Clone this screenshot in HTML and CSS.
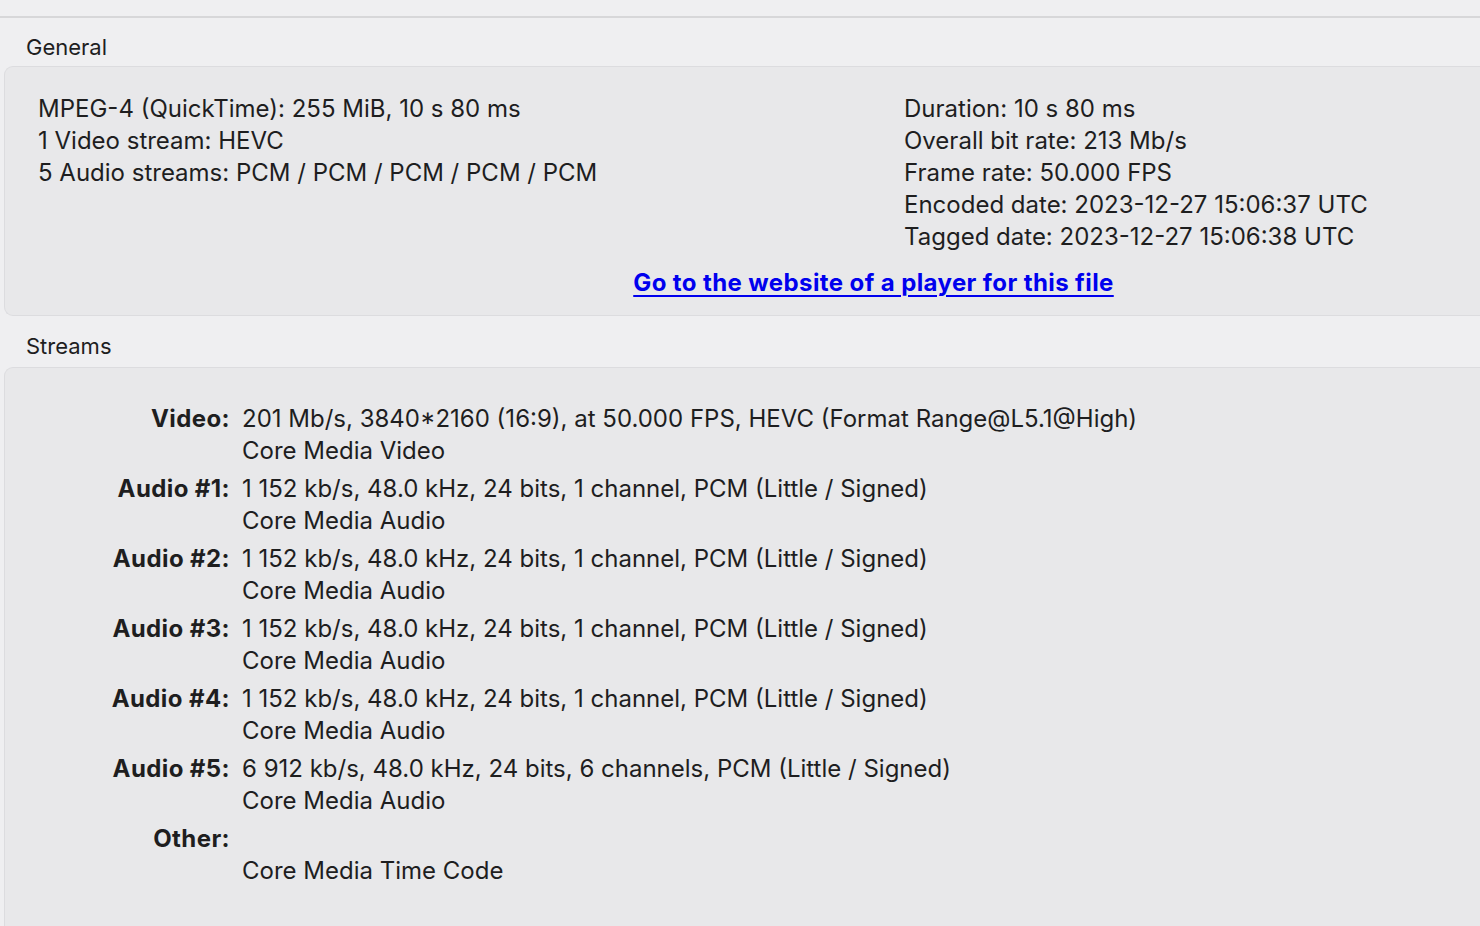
FILE: index.html
```html
<!DOCTYPE html>
<html>
<head>
<meta charset="utf-8">
<link rel="stylesheet" href="styles.css">
</head>
<body>
<div class="topbar"></div>
<div class="section-title">General</div>
<div class="box general">
  <div class="cols">
    <div class="col left">
      <div class="line">MPEG-4 (QuickTime): 255 MiB, 10 s 80 ms</div>
      <div class="line">1 Video stream: HEVC</div>
      <div class="line">5 Audio streams: PCM / PCM / PCM / PCM / PCM</div>
    </div>
    <div class="col right">
      <div class="line">Duration: 10 s 80 ms</div>
      <div class="line">Overall bit rate: 213 Mb/s</div>
      <div class="line">Frame rate: 50.000 FPS</div>
      <div class="line">Encoded date: 2023-12-27 15:06:37 UTC</div>
      <div class="line">Tagged date: 2023-12-27 15:06:38 UTC</div>
    </div>
  </div>
  <div class="linkrow"><a href="#">Go to the website of a player for this file</a></div>
</div>
<div class="section-title streams-title">Streams</div>
<div class="box streams">
  <div class="grid">
    <div class="label">Video:</div>
    <div class="value"><div class="line">201 Mb/s, 3840*2160 (16:9), at 50.000 FPS, HEVC (Format Range@L5.1@High)</div><div class="line">Core Media Video</div></div>
    <div class="label">Audio #1:</div>
    <div class="value"><div class="line">1 152 kb/s, 48.0 kHz, 24 bits, 1 channel, PCM (Little / Signed)</div><div class="line">Core Media Audio</div></div>
    <div class="label">Audio #2:</div>
    <div class="value"><div class="line">1 152 kb/s, 48.0 kHz, 24 bits, 1 channel, PCM (Little / Signed)</div><div class="line">Core Media Audio</div></div>
    <div class="label">Audio #3:</div>
    <div class="value"><div class="line">1 152 kb/s, 48.0 kHz, 24 bits, 1 channel, PCM (Little / Signed)</div><div class="line">Core Media Audio</div></div>
    <div class="label">Audio #4:</div>
    <div class="value"><div class="line">1 152 kb/s, 48.0 kHz, 24 bits, 1 channel, PCM (Little / Signed)</div><div class="line">Core Media Audio</div></div>
    <div class="label">Audio #5:</div>
    <div class="value"><div class="line">6 912 kb/s, 48.0 kHz, 24 bits, 6 channels, PCM (Little / Signed)</div><div class="line">Core Media Audio</div></div>
    <div class="label">Other:</div>
    <div class="value"><div class="line">&nbsp;</div><div class="line">Core Media Time Code</div></div>
  </div>
</div>
</body>
</html>
```
FILE: styles.css
```css
html, body {
  margin: 0;
  padding: 0;
}
body {
  background: #efeff1;
  color: #1e1e1f;
  font-family: Inter, "Noto Sans", "Liberation Sans", sans-serif;
  height: 926px;
  overflow: hidden;
}
.topbar {
  height: 16px;
  border-bottom: 2px solid #d7d7d9;
}
.section-title {
  font-size: 22px;
  line-height: 24px;
  padding: 17px 0 7px 26px;
  height: 24px;
}
.streams-title {
  padding-top: 18px;
  padding-bottom: 9px;
}
.box {
  margin-left: 4px;
  background: #e8e8ea;
  border: 1px solid #dcdcdf;
  border-right: none;
  border-radius: 9px 0 0 9px;
  box-sizing: border-box;
}
.general {
  height: 250px;
  padding-top: 26px;
}
.cols {
  display: flex;
}
.left {
  width: 866px;
  padding-left: 33px;
  box-sizing: border-box;
}
.right {
  flex: 1;
  padding-left: 33px;
}
.line {
  font-size: 24px;
  line-height: 32px;
  white-space: nowrap;
}
.linkrow {
  text-align: center;
  margin-top: 14px;
  padding-left: 262px;
  font-size: 24px;
  line-height: 32px;
}
.linkrow a {
  color: #0000ee;
  font-weight: 700;
  letter-spacing: 0.4px;
  text-decoration: underline;
  text-decoration-thickness: 2px;
  text-underline-offset: 4px;
}
.streams {
  height: 600px;
  padding-top: 35px;
}
.grid {
  display: grid;
  grid-template-columns: 225px auto;
  column-gap: 12px;
  row-gap: 6px;
}
.label {
  text-align: right;
  font-weight: 700;
  font-size: 24px;
  line-height: 32px;
  letter-spacing: 0.4px;
}
```
